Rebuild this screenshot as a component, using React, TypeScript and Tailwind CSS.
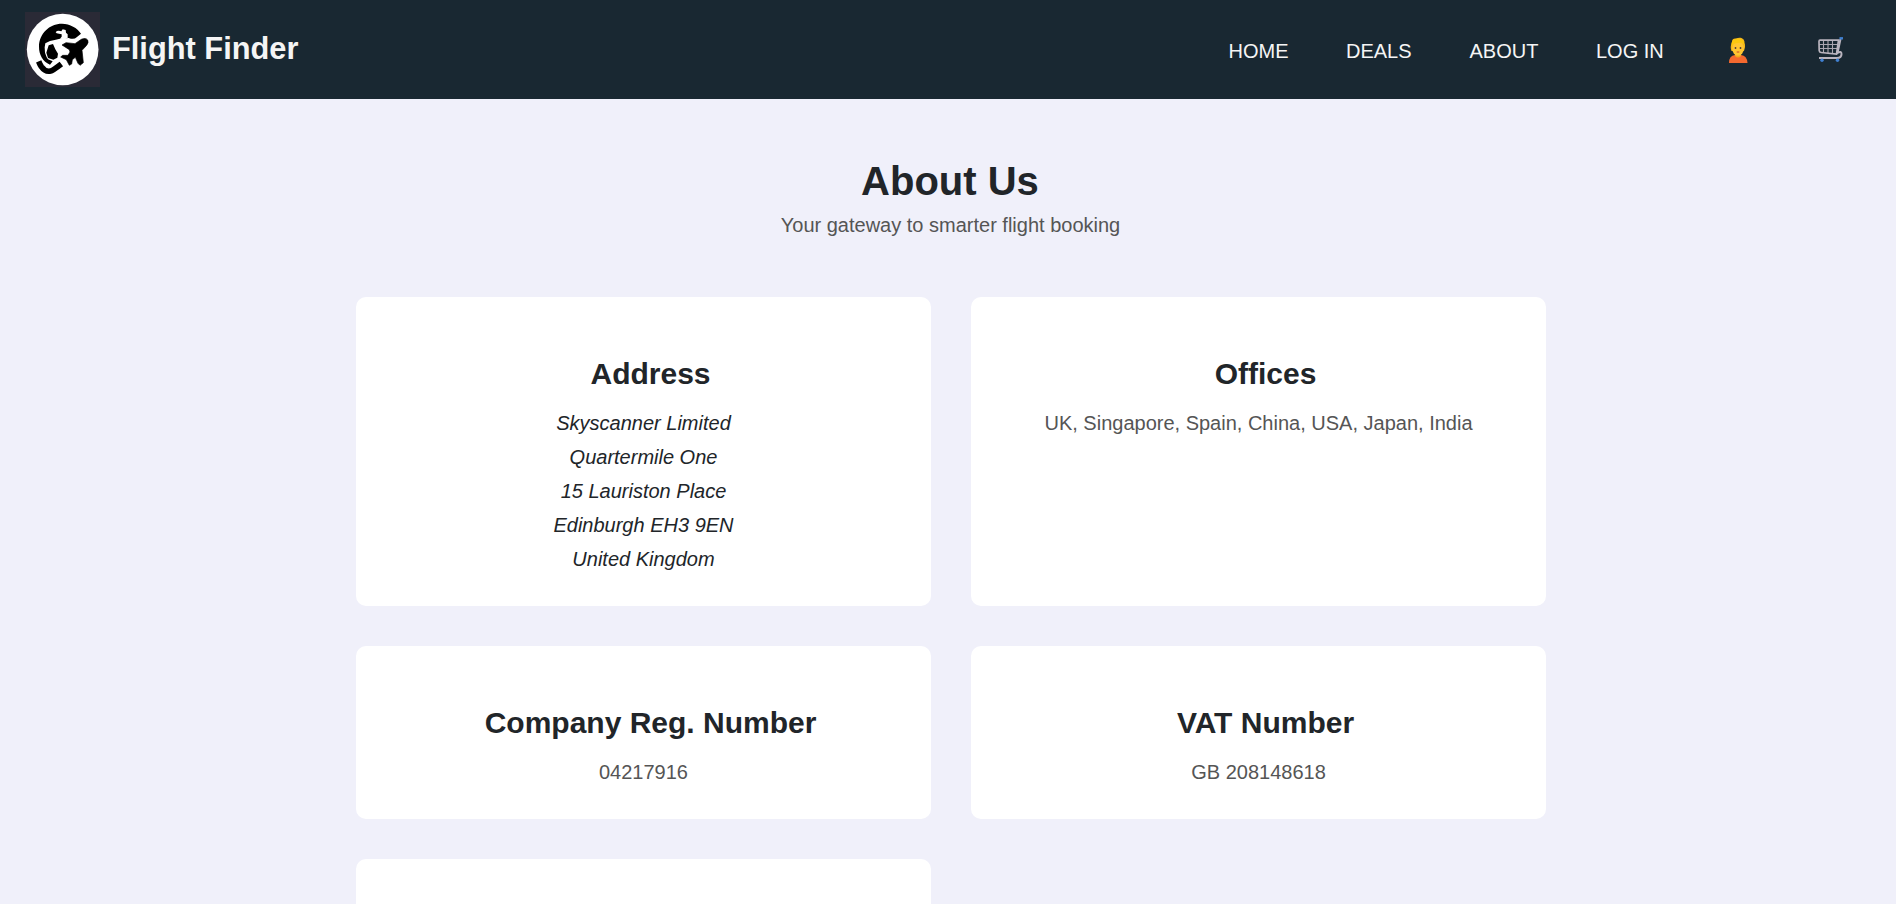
import React from "react";

const navLinks = [
  { label: "HOME", cls: "w-[60px]" },
  { label: "DEALS", cls: "w-[66px]" },
  { label: "ABOUT", cls: "w-[69px]" },
  { label: "LOG IN", cls: "w-[69px]" },
];

function Logo() {
  return (
    <svg viewBox="15 12 225 225" className="block h-[75px] w-[75px] shrink-0 bg-[#2a2a36]">
      <circle cx="128" cy="124.500" r="107.500" fill="#fff" />
      <path
        d="M57 116 C57 77 88 47 126 47 C150 47 172 60 183 77 L170 88 Q162 96 146 90 L120 92 L104 96 L90 99 L76 106 L74 118 L75 134 L80 148 L84 154 L98 160 L90 170 C68 160 57 140 57 116 Z"
        fill="#000"
      />
      <path
        d="M107 73 Q112 66 124 70 L128 64 L137 66 L138 74 L143 79 L143 90 L134 94 L120 92 L125 86 L125 79 L117 77 L110 76 Z"
        fill="#fff"
      />
      <path d="M86 112 L99 108 L106 124 L114 137 L112 149 L100 155 L84 150 L79 134 Z" fill="#000" />
      <path
        d="M126 111 L138 104 L165 107 L184 94 Q197 88 203 96 Q207 104 199 113 L186 127 L190 164 L180 172 L174 166 L166 148 L157 155 L155 168 L148 172 L139 155 L122 147 L128 142 L144 142 L150 132 L148 125 Z"
        fill="#000"
        stroke="#000"
        strokeWidth="2"
        strokeLinejoin="round"
      />
      <path d="M56 160 Q60 170 64 176 Q76 193 92 189 Q98 188 124 168" fill="none" stroke="#000" strokeWidth="17" />
    </svg>
  );
}

function PersonIcon() {
  return (
    <svg viewBox="0 0 20 26" className="block h-[26px] w-5">
      <path d="M3.500 14 C2 10 3 8 4 5 C4 2 6 1 8 1.500 C12 -.5 17 1 16.500 6 C17.500 9 17 11 16 14 Z" fill="#f3b51a" />
      <path d="M1 26 Q1 18.500 7 18 L13 18 Q19 18.500 19.500 26 Z" fill="#f4692f" />
      <path d="M7 15 H13 V19 Q10 22 7 19 Z" fill="#f2a91c" />
      <ellipse cx="10" cy="11.500" rx="5.800" ry="7.300" fill="#ffc531" />
      <path d="M3.500 9 Q3 3 7 2 Q16 0 16.500 8 Q14 5 10 6 Q6 6 3.500 9Z" fill="#fbc70f" />
      <circle cx="7.500" cy="11" r=".9" fill="#4c3b39" />
      <circle cx="12.500" cy="11" r=".9" fill="#4c3b39" />
      <path d="M8.700 15 H11.300" stroke="#c2452d" strokeWidth="1" />
    </svg>
  );
}

function CartIcon() {
  return (
    <svg viewBox="0 0 25 25" className="block h-[25px] w-[25px]" fill="none">
      <path d="M5.500 3.500 V16 M10 3.500 V16 M14.500 3.500 V16.500 M1 7.500 H20.500 M1 11.500 H19.500" stroke="#aaa6b0" strokeWidth="1.100" />
      <path d="M2 3.200 H20.500 L18.500 17 L3 15.500 Q1.300 15.300 1.200 13.500 L1 4.500 Q1 3.200 2 3.200 Z" stroke="#b9b4be" strokeWidth="1.700" />
      <path d="M22.500 2 L19.500 16 Q23.500 13.500 23.500 17 Q23.500 21 19 21 H1" stroke="#b9b4be" strokeWidth="2" />
      <path d="M21.500 1.300 H25" stroke="#3f7fd0" strokeWidth="2.400" />
      <circle cx="4" cy="23.300" r="1.700" fill="#3f7fd0" />
      <circle cx="19.500" cy="23.300" r="1.700" fill="#3f7fd0" />
    </svg>
  );
}

function Card({ title, children }: { title?: string; children?: React.ReactNode }) {
  return (
    <section className="rounded-[10px] bg-white px-[30px] pt-[51px] pb-[30px] text-center text-xl leading-[34px] text-[#555]">
      <h2 className="mb-[7px] pl-[14px] text-[30px] leading-[51px] font-bold text-[#212529]">{title}</h2>
      {children}
    </section>
  );
}

export default function App() {
  return (
    <div className="h-screen overflow-hidden bg-[#f0f0fa] font-['Liberation_Sans',Arial,sans-serif] text-[#212529]">
      <header className="flex h-[99px] items-center justify-between bg-[#192832] pr-[53px] pl-[25px] text-[#f5f5f5]">
        <div className="flex items-center gap-3">
          <Logo />
          <span className="pb-px text-[30.8px] leading-9 font-bold">Flight Finder</span>
        </div>
        <nav className="flex items-center gap-[57.5px] pt-0.5 text-xl leading-[30px] whitespace-nowrap">
          {navLinks.map((link) => (
            <a key={link.label} className={link.cls}>
              {link.label}
            </a>
          ))}
          <a className="mr-[2px] ml-[5px] pb-0.5">
            <PersonIcon />
          </a>
          <a className="ml-[11px] pb-0.5">
            <CartIcon />
          </a>
        </nav>
      </header>
      <main className="mx-auto w-[1190px] translate-x-[3px] pt-[58px]">
        <div className="text-center">
          <h1 className="pr-0.5 text-[40px] leading-[48px] font-bold">About Us</h1>
          <p className="mt-[3px] pr-px text-xl leading-[34px] text-[#555]">Your gateway to smarter flight booking</p>
        </div>
        <div className="mt-[55px] grid grid-cols-2 gap-10">
          <Card title="Address">
            <address className="text-[#212529] italic">
              Skyscanner Limited
              <br />
              Quartermile One
              <br />
              15 Lauriston Place
              <br />
              Edinburgh EH3 9EN
              <br />
              United Kingdom
            </address>
          </Card>
          <Card title="Offices">
            <p>UK, Singapore, Spain, China, USA, Japan, India</p>
          </Card>
          <Card title="Company Reg. Number">
            <p>04217916</p>
          </Card>
          <Card title="VAT Number">
            <p>GB 208148618</p>
          </Card>
          <Card />
        </div>
      </main>
    </div>
  );
}
